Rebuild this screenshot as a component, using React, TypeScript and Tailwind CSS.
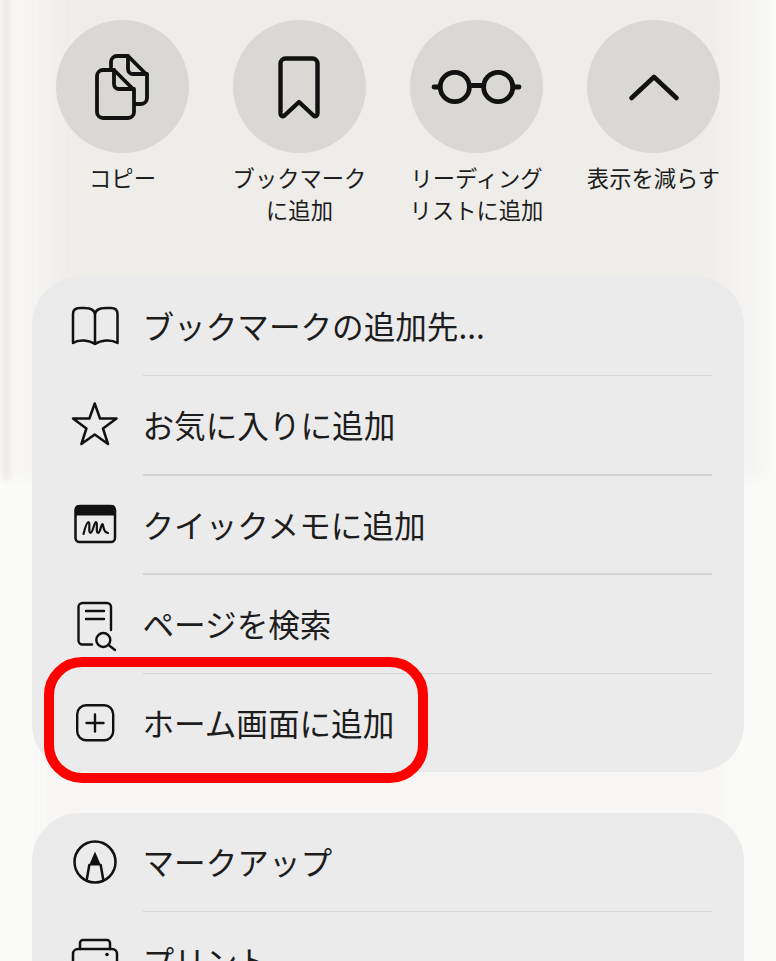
import type { ReactNode } from "react";

const top = [
  { label: "コピー", icon: <CopyIcon /> },
  { label: "ブックマーク\nに追加", icon: <BookmarkIcon /> },
  { label: "リーディング\nリストに追加", icon: <GlassesIcon /> },
  { label: "表示を減らす", icon: <ChevronIcon /> },
];

const mainRows = [
  { label: "ブックマークの追加先...", icon: <BookIcon /> },
  { label: "お気に入りに追加", icon: <StarIcon /> },
  { label: "クイックメモに追加", icon: <NoteIcon /> },
  { label: "ページを検索", icon: <FindIcon /> },
  { label: "ホーム画面に追加", icon: <PlusIcon /> },
];

const otherRows = [
  { label: "マークアップ", icon: <MarkupIcon /> },
  { label: "プリント", icon: <PrintIcon /> },
];

export default function App() {
  return (
    <div className="relative h-[961px] w-[776px] overflow-hidden bg-[#fbfbfa] font-['Noto_Sans_CJK_JP','Noto_Sans',sans-serif] text-[#1d1d1d]">
      {/* blurred page behind the sheet */}
      <div className="absolute left-[12px] top-[-20px] h-[500px] w-[756px] bg-[#f6f5f4] blur-[6px]" />
      <div className="absolute left-[52px] top-[-40px] h-[520px] w-[676px] bg-[#efedea] blur-[14px]" />
      <div className="absolute left-[3px] top-[-10px] h-[490px] w-[6px] bg-[#ebe6df] blur-[3px]" />
      <div className="absolute left-[40px] top-[500px] h-[400px] w-[690px] bg-[#f7f6f4] blur-[12px]" />

      <div className="relative flex gap-[44px] pl-[56px] pt-[20px]">
        {top.map((t) => (
          <div key={t.label} className="flex w-[133px] flex-col items-center">
            <div className="flex size-[133px] items-center justify-center rounded-full bg-[#d9d8d5]">{t.icon}</div>
            <p className="mt-[8px] w-[150px] whitespace-pre-line text-center text-[22.3px] leading-[32px]">{t.label}</p>
          </div>
        ))}
      </div>

      <div className="relative mt-[52px] flex flex-col gap-[41px] px-[32px]">
        <Card rows={mainRows} />
        <Card rows={otherRows} />
      </div>

      {/* red highlight over the home screen row */}
      <div className="absolute left-[44px] top-[657px] h-[126px] w-[384px] rounded-[38px] border-[10.5px] border-[#ff0000]" />
    </div>
  );
}

function Card({ rows }: { rows: { label: string; icon: ReactNode }[] }) {
  return (
    <div className="rounded-[48px] bg-[#ebebeb]">
      {rows.map((r, i) => (
        <div key={r.label}>
          <div className="flex h-[97.8px] items-center pl-[39px]">
            <div className="size-[48px] shrink-0">{r.icon}</div>
            <span className="ml-[23.5px] text-[31.6px] leading-none">{r.label}</span>
          </div>
          {i < rows.length - 1 && <div className="ml-[111px] mr-[32px] h-[1.5px] bg-[#d3d3d6]" />}
        </div>
      ))}
    </div>
  );
}

function TopSvg({ children }: { children: ReactNode }) {
  return (
    <svg width="100" height="100" viewBox="-10 -10 100 100" fill="none" stroke="#111" strokeWidth="3.8" strokeLinecap="round" strokeLinejoin="round">
      {children}
    </svg>
  );
}

function RowSvg({ children, sw = 2.5 }: { children: ReactNode; sw?: number }) {
  return (
    <svg width="48" height="48" viewBox="0 0 48 48" fill="none" stroke="#111" strokeWidth={sw} strokeLinecap="round" strokeLinejoin="round" className="overflow-visible">
      {children}
    </svg>
  );
}

function CopyIcon() {
  return (
    <TopSvg>
      <path d="M31 23H20a6 6 0 0 0-6 6V65a6 6 0 0 0 6 6H45a6 6 0 0 0 6-6V43L31 23Z" />
      <path d="M31 23V37a5 5 0 0 0 5 5H51" />
      <path d="M28 20V15a6 6 0 0 1 6-6H45L64 28V51a6 6 0 0 1-6 6H52" />
      <path d="M45 9V22a5 5 0 0 0 5 5H64" />
    </TopSvg>
  );
}

function BookmarkIcon() {
  return (
    <TopSvg>
      <path strokeWidth="4.4" d="M25.5 11.5H52.5a5 5 0 0 1 5 5V66.5c0 2.5-2 3.5-4 2L39 55 24.5 68.5c-2 1.5-4 .5-4-2V16.5a5 5 0 0 1 5-5Z" />
    </TopSvg>
  );
}

function GlassesIcon() {
  return (
    <TopSvg>
      <g strokeWidth="4.8">
        <circle cx="17.8" cy="40" r="14.6" />
        <circle cx="61.2" cy="40" r="14.6" />
        <path d="M-3 40H3M33 38.5H46M76 40H82" />
      </g>
    </TopSvg>
  );
}

function ChevronIcon() {
  return (
    <TopSvg>
      <path strokeWidth="4.6" d="M17.5 51L40 30 62.5 51" />
    </TopSvg>
  );
}

function BookIcon() {
  return (
    <RowSvg>
      <path d="M24 13C24 8 19 6 13 6H9C4 6 2 8 2 12V41C8 37 18 38 24 42C30 38 40 37 46.5 41V12C46.5 8 44.5 6 40 6H35C29 6 24 8 24 13V42" />
    </RowSvg>
  );
}

function StarIcon() {
  return (
    <RowSvg>
      <path d="M23.7 2.5L29 17.5H45.5L32 27.5L37 43L23.7 33.5L10.4 43L15.4 27.5L2 17.5H18.4Z" />
    </RowSvg>
  );
}

function NoteIcon() {
  return (
    <RowSvg>
      <rect x="4.5" y="6" width="39.5" height="36" rx="4" />
      <path fill="#111" stroke="none" d="M4.5 15.5V8a3 3 0 0 1 3-3H41a3 3 0 0 1 3 3V15.5Z" />
      <path strokeWidth="2.2" d="M12.5 34C14 28 16 22 17.5 22C19.5 22 17 33 19.5 33C22 33 23 22 25 22C27 22 24.5 33 27 33C29.5 33 30 24 31.5 24C33 24 31 32 37 33" />
    </RowSvg>
  );
}

function FindIcon() {
  return (
    <RowSvg sw={2.4}>
      <path d="M21 44.5H11.5a4 4 0 0 1-4-4V7a4 4 0 0 1 4-4H36a4 4 0 0 1 4 4V30" />
      <path d="M15 11H33M15 19H33" />
      <circle cx="32.3" cy="40" r="7" />
      <path d="M37.5 45L44 50" />
    </RowSvg>
  );
}

function PlusIcon() {
  return (
    <RowSvg sw={2.4}>
      <rect x="6.2" y="6.2" width="36" height="35" rx="9" />
      <path d="M15.5 24H32.5M24 15.5V32.5" />
    </RowSvg>
  );
}

function MarkupIcon() {
  return (
    <RowSvg>
      <circle cx="24" cy="24" r="20.5" />
      <path fill="#111" stroke="none" d="M24 13.5L18 27.5H30Z" />
      <path d="M18.3 27L15.7 42M29.7 27L32.3 42" />
    </RowSvg>
  );
}

function PrintIcon() {
  return (
    <RowSvg>
      <path d="M9 12V6a3 3 0 0 1 3-3H36a3 3 0 0 1 3 3V12" />
      <rect x="2" y="12" width="44" height="30" rx="5" />
      <circle cx="36" cy="17.5" r="1.8" fill="#111" stroke="none" />
    </RowSvg>
  );
}
